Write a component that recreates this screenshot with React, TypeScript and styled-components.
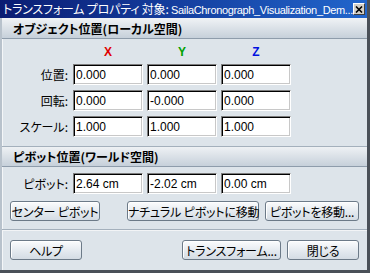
import React from "react";
import styled, { createGlobalStyle } from "styled-components";

const GlobalStyle = createGlobalStyle`
  html, body {
    margin: 0;
    padding: 0;
    background: #dde4ea;
  }
  body {
    font-family: "Noto Sans CJK JP", sans-serif;
    font-feature-settings: "palt";
  }
`;

const Window = styled.div`
  width: 370px;
  height: 273px;
  box-sizing: border-box;
  display: flex;
  flex-direction: column;
  background: #dde4ea;
  border-right: 3px solid #4a5058;
  border-bottom: 3px solid #4a5058;
  overflow: hidden;
`;

const TitleBar = styled.div`
  height: 18px;
  flex: none;
  display: flex;
  align-items: center;
  padding: 0 2px 0 3px;
  background: linear-gradient(to right, #0a1c72 0%, #143c9c 45%, #2266cc 100%);
  color: #fff;
  font-size: 12px;
  line-height: 18px;
`;

const TitleText = styled.div`
  flex: 1;
  white-space: nowrap;
  letter-spacing: -0.2px;
`;

const TitleLatin = styled.span`
  font-family: "Liberation Sans", sans-serif;
  font-size: 11px;
  letter-spacing: -0.35px;
`;

const CloseBox = styled.div`
  width: 14px;
  height: 12px;
  box-sizing: border-box;
  background: #d4d0c8;
  border: 1px solid;
  border-color: #fff #404040 #404040 #fff;
  display: flex;
  align-items: center;
  justify-content: center;
`;

const Body = styled.div`
  flex: 1;
  display: flex;
  flex-direction: column;
  border-left: 2px solid #b8c2cc;
  box-shadow: inset 1px 0 0 #f4f6f8;
`;

const SectionHeader = styled.div<{ $top?: boolean }>`
  height: 19px;
  display: flex;
  align-items: center;
  padding-left: 11px;
  font-size: 12px;
  font-weight: bold;
  color: #000;
  background: linear-gradient(to bottom, #eef1f4, #c6d0da);
  border-top: 1px solid ${(p) => (p.$top ? "#a4b0bc" : "#f0f2f4")};
  border-bottom: 1px solid #8e9cab;
`;

const FieldGrid = styled.div<{ $pb: number }>`
  display: grid;
  grid-template-columns: 66px 70px 70px 70px;
  column-gap: 4px;
  row-gap: 5px;
  align-items: center;
  padding: 6px 0 ${(p) => p.$pb}px 1px;
`;

const AxisLabel = styled.div<{ $color: string }>`
  height: 14px;
  line-height: 14px;
  text-align: center;
  font-family: "Liberation Sans", sans-serif;
  font-weight: bold;
  font-size: 12px;
  color: ${(p) => p.$color};
`;

const FieldLabel = styled.div`
  text-align: right;
  font-size: 12px;
  color: #000;
  padding-right: 1px;
`;

const Field = styled.input`
  width: 70px;
  height: 21px;
  box-sizing: border-box;
  margin: 0;
  padding: 0 0 0 2px;
  font-family: "Liberation Sans", sans-serif;
  font-size: 12px;
  color: #000;
  background: #fff;
  border: 1px solid;
  border-color: #7c7c7c #ffffff #ffffff #7c7c7c;
  box-shadow: inset 1px 1px 0 #000, inset -1px -1px 0 #c8c8c8;
  outline: none;
`;

const ButtonRow = styled.div<{ $top: number }>`
  display: flex;
  align-items: center;
  gap: 6px;
  padding: ${(p) => p.$top}px 8px 0 8px;
`;

const Spacer = styled.div`
  flex: 1;
`;

const Button = styled.button<{ $w: number }>`
  width: ${(p) => p.$w}px;
  height: 20px;
  box-sizing: border-box;
  margin: 0;
  padding: 0;
  font-family: "Noto Sans CJK JP", sans-serif;
  font-feature-settings: "palt";
  font-size: 12px;
  letter-spacing: -0.2px;
  color: #000;
  white-space: nowrap;
  border: 1px solid #6c7a88;
  border-radius: 3px;
  background: linear-gradient(to bottom, #fbfcfd, #e2e8ee 60%, #d4dce4);
  box-shadow: inset 1px 1px 0 #fff;
`;

const Separator = styled.div`
  margin-top: 8px;
  height: 1px;
  background: #a4b0bc;
  border-bottom: 1px solid #f2f4f6;
`;

const axes = [
  { name: "X", color: "#e00000" },
  { name: "Y", color: "#00a000" },
  { name: "Z", color: "#0010e0" },
];

const rows = [
  { label: "位置:", values: ["0.000", "0.000", "0.000"] },
  { label: "回転:", values: ["0.000", "-0.000", "0.000"] },
  { label: "スケール:", values: ["1.000", "1.000", "1.000"] },
];

const pivot = ["2.64 cm", "-2.02 cm", "0.00 cm"];

export default function App() {
  return (
    <>
      <GlobalStyle />
      <Window>
        <TitleBar>
          <TitleText>
            トランスフォーム プロパティ 対象:{" "}
            <TitleLatin>SailaChronograph_Visualization_Dem...</TitleLatin>
          </TitleText>
          <CloseBox>
            <svg width="8" height="7" viewBox="0 0 8 7">
              <path d="M1 0.5 L7 6.5 M7 0.5 L1 6.5" stroke="#000" strokeWidth="1.6" />
            </svg>
          </CloseBox>
        </TitleBar>
        <Body>
          <SectionHeader>オブジェクト位置(ローカル空間)</SectionHeader>
          <FieldGrid $pb={9}>
            <div />
            {axes.map((a) => (
              <AxisLabel key={a.name} $color={a.color}>
                {a.name}
              </AxisLabel>
            ))}
            {rows.map((r) => (
              <React.Fragment key={r.label}>
                <FieldLabel>{r.label}</FieldLabel>
                {r.values.map((v, i) => (
                  <Field key={i} defaultValue={v} readOnly />
                ))}
              </React.Fragment>
            ))}
          </FieldGrid>
          <SectionHeader $top>ピボット位置(ワールド空間)</SectionHeader>
          <FieldGrid $pb={0}>
            <FieldLabel>ピボット:</FieldLabel>
            {pivot.map((v, i) => (
              <Field key={i} defaultValue={v} readOnly />
            ))}
          </FieldGrid>
          <ButtonRow $top={7}>
            <Button $w={90}>センター ピボット</Button>
            <Spacer />
            <Button $w={132}>ナチュラル ピボットに移動</Button>
            <Button $w={94}>ピボットを移動...</Button>
          </ButtonRow>
          <Separator />
          <ButtonRow $top={9}>
            <Button $w={72}>ヘルプ</Button>
            <Spacer />
            <Button $w={99}>トランスフォーム...</Button>
            <Button $w={72}>閉じる</Button>
          </ButtonRow>
        </Body>
      </Window>
    </>
  );
}
